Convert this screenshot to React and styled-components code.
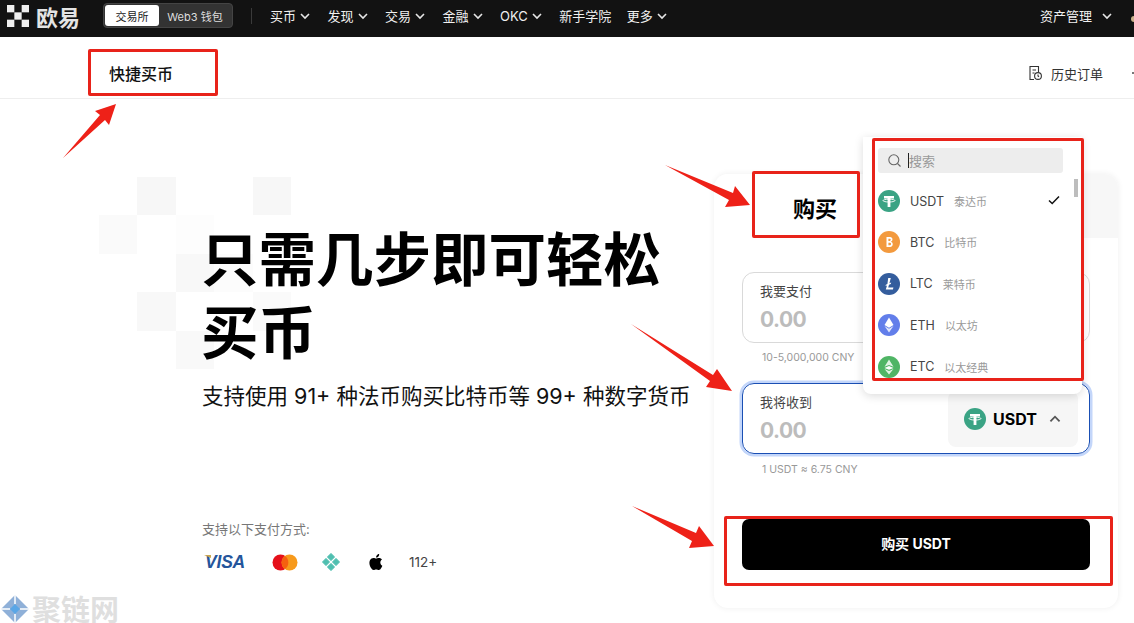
import React from 'react';
import styled, { createGlobalStyle } from 'styled-components';

const GlobalStyle = createGlobalStyle`
  html, body { margin: 0; padding: 0; background: #fff; }
  body {
    width: 1134px;
    height: 623px;
    overflow: hidden;
    font-family: Inter, "Noto Sans CJK SC", sans-serif;
    color: #000;
  }
  * { box-sizing: border-box; }
`;

const Page = styled.div`
  position: relative;
  width: 1134px;
  height: 623px;
  overflow: hidden;
`;

const TopBar = styled.header`
  display: flex;
  align-items: center;
  height: 37px;
  padding: 0 0 6px 7px;
  background: #121212;
  color: #f0f0f0;
  font-size: 13px;
`;

const Brand = styled.div`
  display: flex;
  align-items: center;
  gap: 7px;
  width: 96px;
  font-size: 22px;
  font-weight: 700;
  color: #e4e4e4;
`;

const Switcher = styled.div`
  display: flex;
  width: 130px;
  height: 25px;
  padding: 1px;
  border-radius: 4px;
  background: #333;
  border: 1px solid #444;
  font-size: 11px;
`;

const SwitchTab = styled.div`
  display: flex;
  align-items: center;
  justify-content: center;
  border-radius: 3px;
  width: ${p => (p.$active ? '54px' : '72px')};
  background: ${p => (p.$active ? '#fff' : 'transparent')};
  color: ${p => (p.$active ? '#222' : '#ddd')};
`;

const Divider = styled.div`
  width: 1px;
  height: 16px;
  margin: 0 18px;
  background: #3a3a3a;
`;

const Nav = styled.nav`
  display: flex;
  gap: 15.5px;
  flex: 1;
`;

const NavItem = styled.div`
  display: flex;
  align-items: center;
  gap: 2px;
  white-space: nowrap;
`;

const Assets = styled(NavItem)`
  gap: 8px;
  margin-right: 17px;
`;

const ProfileDot = styled.span`
  width: 3px;
  height: 6px;
  margin-top: 7px;
  border-radius: 3px 0 0 3px;
  background: #c9b08a;
`;

const SubHeader = styled.div`
  display: flex;
  align-items: center;
  justify-content: space-between;
  height: 62px;
  padding: 11px 0 0 109px;
  border-bottom: 1px solid #eee;
`;

const SubTitle = styled.div`
  font-size: 16px;
  font-weight: 500;
  color: #111;
`;

const SubActions = styled.div`
  display: flex;
  align-items: center;
  gap: 29px;
`;

const HistoryLink = styled.div`
  display: flex;
  align-items: center;
  gap: 8px;
  font-size: 13px;
  color: #333;
`;

const EdgeMark = styled.span`
  width: 2px;
  height: 2px;
  background: #777;
`;

const Main = styled.main`
  display: flex;
  justify-content: space-between;
  padding: 75px 16px 0 202px;
`;

const Hero = styled.section`
  position: relative;
  width: 500px;
`;

const PixelGrid = styled.div`
  position: absolute;
  left: -103px;
  top: 3px;
  display: grid;
  grid-template-columns: repeat(5, 38.4px);
  grid-auto-rows: 38.4px;
`;

const Pixel = styled.div`
  background: ${p => p.$tone || 'transparent'};
`;

const HeroTitle = styled.h1`
  position: relative;
  margin: 50px 0 0 -1px;
  width: 470px;
  font-size: 57.5px;
  line-height: 73px;
  font-weight: 700;
  color: #000;
`;

const HeroSub = styled.p`
  position: relative;
  margin: 11px 0 0;
  font-size: 21.5px;
  line-height: 30px;
  font-weight: 400;
  white-space: nowrap;
  color: #111;
`;

const PayLabel = styled.div`
  margin-top: 108px;
  font-size: 13px;
  color: #777;
`;

const PayRow = styled.div`
  display: flex;
  align-items: center;
  margin-top: 12px;
  height: 24px;
`;

const PaySlot = styled.div`
  display: flex;
  align-items: center;
  width: ${p => p.$w}px;
`;

const VisaMark = styled.span`
  position: relative;
  margin-left: 3px;
  font-family: "Liberation Sans", sans-serif;
  font-size: 17.5px;
  font-weight: 700;
  font-style: italic;
  letter-spacing: -0.2px;
  color: #24559b;

  &::before {
    content: '';
    position: absolute;
    left: -1px;
    top: 3px;
    border-style: solid;
    border-width: 3px 0 3px 7px;
    border-color: #c9a650 transparent transparent transparent;
  }
`;

const PayMore = styled.span`
  font-size: 13.5px;
  color: #444;
`;

const Card = styled.section`
  position: relative;
  width: 404px;
  height: 434px;
  padding: 98px 28px 0;
  border-radius: 14px;
  background: #fff;
  box-shadow: 0 0 6px rgba(0, 0, 0, 0.07);
`;

const CardTabs = styled.div`
  position: absolute;
  left: 0;
  right: 0;
  top: 0;
  height: 64px;
  border-radius: 14px 14px 0 0;
  background: linear-gradient(90deg, #fff 0%, #fff 70%, #f7f7f7 85%);
`;

const CardTitle = styled.div`
  position: absolute;
  left: 79px;
  top: 17px;
  font-size: 22px;
  font-weight: 700;
  color: #000;
`;

const Field = styled.div`
  display: flex;
  align-items: center;
  justify-content: space-between;
  height: 71px;
  padding: 0 11px 0 17px;
  border-radius: 12px;
  border: 1px solid ${p => (p.$focus ? '#1a4fb4' : '#d9d9d9')};
  box-shadow: ${p => (p.$focus ? '0 0 0 2.5px #c3d6fa' : 'none')};
`;

const FieldText = styled.div`
  display: flex;
  flex-direction: column;
  gap: 7px;
`;

const FieldLabel = styled.div`
  font-size: 13px;
  line-height: 18px;
  color: #444;
`;

const FieldValue = styled.div`
  font-size: 21px;
  line-height: 26px;
  font-weight: 700;
  letter-spacing: -0.5px;
  color: #bcbcbc;
`;

const CoinPicker = styled.div`
  display: flex;
  align-items: center;
  gap: 7px;
  width: 130px;
  height: 56px;
  padding-left: 16px;
  border-radius: 8px;
  background: #f6f6f6;
  font-size: 16px;
  font-weight: 700;
`;

const PickerCaret = styled.span`
  display: flex;
  margin-left: 3px;
`;

const Hint = styled.div`
  margin: ${p => p.$gap}px 0 ${p => p.$after}px 20px;
  font-size: 10.5px;
  line-height: 14px;
  color: #999;
`;

const BuyButton = styled.button`
  display: block;
  width: 348px;
  height: 51px;
  padding: 0 0 3px;
  border: none;
  border-radius: 7px;
  background: #000;
  color: #fff;
  font: 700 14px Inter, "Noto Sans CJK SC", sans-serif;
`;

const Dropdown = styled.div`
  position: absolute;
  left: 863px;
  top: 137px;
  width: 219px;
  height: 257px;
  overflow: hidden;
  border-radius: 0 0 8px 8px;
  background: #fff;
  box-shadow: 0 2px 10px rgba(0, 0, 0, 0.14);
`;

const SearchBox = styled.div`
  display: flex;
  align-items: center;
  gap: 6px;
  height: 25px;
  margin: 11px 19px 0 15px;
  padding-left: 9px;
  border-radius: 3px;
  background: #ededed;
  font-size: 13px;
  color: #999;
`;

const Caret = styled.span`
  width: 1px;
  height: 15px;
  margin-right: -6px;
  background: #222;
`;

const CoinList = styled.div`
  display: flex;
  flex-direction: column;
  gap: 19.4px;
  margin-top: 17px;
  padding-left: 15px;
`;

const CoinRow = styled.div`
  display: flex;
  align-items: center;
  height: 22px;
  font-size: 12.5px;
  color: #444;
`;

const CoinCode = styled.span`
  margin-left: 10px;
`;

const CoinName = styled.span`
  margin-left: 10px;
  font-size: 11px;
  color: #999;
`;

const CheckMark = styled.svg`
  position: absolute;
  left: 184px;
  top: 56px;
`;

const ScrollThumb = styled.div`
  position: absolute;
  left: 211px;
  top: 42px;
  width: 4px;
  height: 18px;
  background: #bdbdbd;
`;

const RedFrame = styled.div`
  position: absolute;
  left: ${p => p.$x}px;
  top: ${p => p.$y}px;
  width: ${p => p.$w}px;
  height: ${p => p.$h}px;
  border: 3px solid #e8231a;
  border-radius: 2px;
  pointer-events: none;
`;

const ArrowLayer = styled.svg`
  position: absolute;
  left: 0;
  top: 0;
  pointer-events: none;
`;

const Watermark = styled.div`
  position: absolute;
  left: 1px;
  top: 594px;
  display: flex;
  align-items: center;
  gap: 3px;
  font-family: "Noto Sans CJK SC", "Liberation Serif", serif;
  font-size: 29px;
  font-weight: 700;
  line-height: 29px;
  color: #dfdfdf;
`;

const Chevron = ({ size = 14, up, color = '#e6e6e6' }) => (
  <svg width={size} height={size} viewBox="0 0 14 14" fill="none">
    <path d={up ? 'M3 9l4-4 4 4' : 'M3 5l4 4 4-4'} stroke={color} strokeWidth="1.6" />
  </svg>
);

const OkxMark = () => (
  <svg width="22" height="22" viewBox="0 0 22 22" fill="#eee">
    <rect x="0" y="0" width="7.330" height="7.330" />
    <rect x="14.670" y="0" width="7.330" height="7.330" />
    <rect x="7.330" y="7.330" width="7.340" height="7.340" />
    <rect x="0" y="14.670" width="7.330" height="7.330" />
    <rect x="14.670" y="14.670" width="7.330" height="7.330" />
  </svg>
);

const HistoryIcon = () => (
  <svg width="15" height="16" viewBox="0 0 15 16" fill="none" stroke="#333" strokeWidth="1.1">
    <path d="M6 14.5H2V1.5h8.5V7" />
    <path d="M4.5 5h3.5M4.5 8h2" />
    <circle cx="10" cy="11" r="3.4" />
    <path d="M10 9.5V11l1 .8" />
  </svg>
);

const UsdtIcon = ({ size = 22 }) => (
  <svg width={size} height={size} viewBox="0 0 22 22">
    <circle cx="11" cy="11" r="11" fill="#3aa384" />
    <path d="M6 6h10v2.6h-3.6V17H9.6V8.6H6z" fill="#fff" />
    <ellipse cx="11" cy="10.6" rx="6" ry="1.4" fill="none" stroke="#fff" strokeWidth=".9" />
  </svg>
);

const BtcIcon = () => (
  <svg width="22" height="22" viewBox="0 0 22 22">
    <circle cx="11" cy="11" r="11" fill="#f39a3e" />
    <path d="M8.5 6h3.6c3 0 3 4 .8 4.7 2.8.6 2.4 5.3-.8 5.3H8.500zM10.400 7.800v2.200h1.400c1.200 0 1.200-2.200 0-2.200zM10.400 11.700v2.500h1.700c1.400 0 1.400-2.500 0-2.500z" fill="#fff" fillRule="evenodd" />
  </svg>
);

const LtcIcon = () => (
  <svg width="22" height="22" viewBox="0 0 22 22">
    <circle cx="11" cy="11" r="11" fill="#345d9d" />
    <path d="M10.200 5h2.600l-1.400 5.300 1.800-.7-.4 1.500-1.800.7-.8 2.800h5.200l-.5 2H7.800l1.200-4.100-1.500.6.400-1.400 1.500-.6z" fill="#fff" />
  </svg>
);

const EthIcon = () => (
  <svg width="22" height="22" viewBox="0 0 22 22">
    <circle cx="11" cy="11" r="11" fill="#627eea" />
    <path d="M11 3.500l4.500 7.500-4.500 2.700L6.500 11z" fill="#fff" />
    <path d="M11 14.800l4.500-2.700L11 18.500l-4.500-6.400z" fill="#fff" opacity=".8" />
  </svg>
);

const EtcIcon = () => (
  <svg width="22" height="22" viewBox="0 0 22 22">
    <circle cx="11" cy="11" r="11" fill="#4fb565" />
    <path d="M11 3.500l4.500 7.300-4.500-1.900-4.500 1.900z" fill="#dff3e3" />
    <path d="M11 10.100l4.500 1.800-4.500 1.900-4.500-1.900z" fill="#fff" />
    <path d="M11 18.500l4.500-5.400-4.500 1.900-4.500-1.900z" fill="#dff3e3" />
  </svg>
);

const MastercardLogo = () => (
  <svg width="26" height="17" viewBox="0 0 26 17">
    <circle cx="8.500" cy="8.500" r="8" fill="#e5101a" />
    <circle cx="17.500" cy="8.500" r="8" fill="#f79a1c" />
    <path d="M13 2a8 8 0 0 1 0 13 8 8 0 0 1 0-13z" fill="#f5600f" />
  </svg>
);

const PixLogo = () => (
  <svg width="20" height="20" viewBox="0 0 20 20" fill="#4fbfb0" stroke="#4fbfb0" strokeWidth="1" strokeLinejoin="round">
    <path d="M10 1.500L13.600 5 10 8.500 6.400 5z" />
    <path d="M5 6.400L8.500 10 5 13.600 1.500 10z" />
    <path d="M15 6.400L18.500 10 15 13.600 11.500 10z" />
    <path d="M10 11.500L13.600 15 10 18.500 6.400 15z" />
  </svg>
);

const AppleLogo = () => (
  <svg width="17" height="18" viewBox="0 0 17 18" fill="#000">
    <path d="M12.300 9.500c0-2 1.600-2.900 1.700-3-1-1.400-2.400-1.600-2.900-1.600-1.200-.1-2.400.7-3 .7-.6 0-1.600-.7-2.600-.7C4.100 5 2.800 5.700 2.100 7c-1.400 2.400-.4 6 1 8 .7 1 1.500 2 2.500 2 1 0 1.400-.6 2.600-.6s1.500.6 2.600.6c1.100 0 1.800-1 2.400-2 .8-1.100 1.100-2.200 1.100-2.300-.1 0-2-.8-2-3.200z" />
    <path d="M10.400 3.600c.5-.7.900-1.600.8-2.600-.8 0-1.700.5-2.300 1.200-.5.600-.9 1.500-.8 2.400.9.100 1.800-.4 2.300-1z" />
  </svg>
);

const SearchIcon = () => (
  <svg width="15" height="15" viewBox="0 0 15 15" fill="none" stroke="#666" strokeWidth="1.100">
    <circle cx="6.800" cy="6.800" r="5" />
    <path d="M10.500 10.500l3 3" />
  </svg>
);

const navItems = [
  { label: '买币', caret: true },
  { label: '发现', caret: true },
  { label: '交易', caret: true },
  { label: '金融', caret: true },
  { label: 'OKC', caret: true },
  { label: '新手学院' },
  { label: '更多', caret: true },
];

const coins = [
  { code: 'USDT', name: '泰达币', Icon: UsdtIcon },
  { code: 'BTC', name: '比特币', Icon: BtcIcon },
  { code: 'LTC', name: '莱特币', Icon: LtcIcon },
  { code: 'ETH', name: '以太坊', Icon: EthIcon },
  { code: 'ETC', name: '以太经典', Icon: EtcIcon },
];

// 5 x 5 backdrop squares behind the headline, null = empty cell
const pixels = [
  null, '#f7f7f7', null, null, '#f7f7f7',
  '#fafafa', null, '#fdfdfd', null, null,
  null, null, '#f8f8f8', '#fcfcfc', null,
  null, '#f8f8f8', null, null, '#fafafa',
  null, null, '#f9f9f9', null, null,
];

const frames = [
  { x: 88, y: 49, w: 130, h: 47 },
  { x: 752, y: 171, w: 108, h: 67 },
  { x: 872, y: 138, w: 212, h: 243 },
  { x: 724, y: 516, w: 389, h: 70 },
];

const arrows = [
  'M63 158L100 115 95 111 116 104 109 125 105 120z',
  'M665 165L733 193 735 186 750 205 725 207 729 200z',
  'M631 324L713 375 717 369 732 391 706 387 710 381z',
  'M632 506L696 533 699 526 714 546 689 548 692 541z',
];

export default function App() {
  return (
    <Page>
      <GlobalStyle />
      <TopBar>
        <Brand>
          <OkxMark />
          欧易
        </Brand>
        <Switcher>
          <SwitchTab $active>交易所</SwitchTab>
          <SwitchTab>Web3 钱包</SwitchTab>
        </Switcher>
        <Divider />
        <Nav>
          {navItems.map(item => (
            <NavItem key={item.label}>
              {item.label}
              {item.caret && <Chevron />}
            </NavItem>
          ))}
        </Nav>
        <Assets>
          资产管理
          <Chevron />
        </Assets>
        <ProfileDot />
      </TopBar>

      <SubHeader>
        <SubTitle>快捷买币</SubTitle>
        <SubActions>
          <HistoryLink>
            <HistoryIcon />
            历史订单
          </HistoryLink>
          <EdgeMark />
        </SubActions>
      </SubHeader>

      <Main>
        <Hero>
          <PixelGrid>
            {pixels.map((tone, i) => (
              <Pixel key={i} $tone={tone} />
            ))}
          </PixelGrid>
          <HeroTitle>只需几步即可轻松买币</HeroTitle>
          <HeroSub>支持使用 91+ 种法币购买比特币等 99+ 种数字货币</HeroSub>
          <PayLabel>支持以下支付方式:</PayLabel>
          <PayRow>
            <PaySlot $w={70}><VisaMark>VISA</VisaMark></PaySlot>
            <PaySlot $w={49}><MastercardLogo /></PaySlot>
            <PaySlot $w={47}><PixLogo /></PaySlot>
            <PaySlot $w={41}><AppleLogo /></PaySlot>
            <PayMore>112+</PayMore>
          </PayRow>
        </Hero>

        <Card>
          <CardTabs />
          <CardTitle>购买</CardTitle>
          <Field>
            <FieldText>
              <FieldLabel>我要支付</FieldLabel>
              <FieldValue>0.00</FieldValue>
            </FieldText>
          </Field>
          <Hint $gap={8} $after={18}>10-5,000,000 CNY</Hint>
          <Field $focus>
            <FieldText>
              <FieldLabel>我将收到</FieldLabel>
              <FieldValue>0.00</FieldValue>
            </FieldText>
            <CoinPicker>
              <UsdtIcon />
              USDT
              <PickerCaret>
                <Chevron size={16} up color="#555" />
              </PickerCaret>
            </CoinPicker>
          </Field>
          <Hint $gap={9} $after={42}>1 USDT ≈ 6.75 CNY</Hint>
          <BuyButton>购买 USDT</BuyButton>
        </Card>
      </Main>

      <Dropdown>
        <SearchBox>
          <SearchIcon />
          <Caret />
          搜索
        </SearchBox>
        <CoinList>
          {coins.map(({ code, name, Icon }) => (
            <CoinRow key={code}>
              <Icon />
              <CoinCode>{code}</CoinCode>
              <CoinName>{name}</CoinName>
            </CoinRow>
          ))}
        </CoinList>
        <CheckMark width="14" height="14" viewBox="0 0 14 14" fill="none">
          <path d="M2 7.500l3.200 3L12 3.500" stroke="#111" strokeWidth="1.500" />
        </CheckMark>
        <ScrollThumb />
      </Dropdown>

      {frames.map(f => (
        <RedFrame key={f.x} $x={f.x} $y={f.y} $w={f.w} $h={f.h} />
      ))}
      <ArrowLayer width="1134" height="623" viewBox="0 0 1134 623">
        {arrows.map(d => (
          <path key={d} d={d} fill="#ee2118" />
        ))}
      </ArrowLayer>

      <Watermark>
        <svg width="28" height="28" viewBox="0 0 28 28">
          <path d="M14 0L28 14 14 28 0 14z" fill="#8fb0d8" />
          <path d="M14 9l5 5-5 5-5-5z" fill="#5aa6e6" />
          <path d="M14 0v9M28 14h-9M14 28v-9M0 14h9" stroke="#fff" strokeWidth="1.500" />
        </svg>
        聚链网
      </Watermark>
    </Page>
  );
}
